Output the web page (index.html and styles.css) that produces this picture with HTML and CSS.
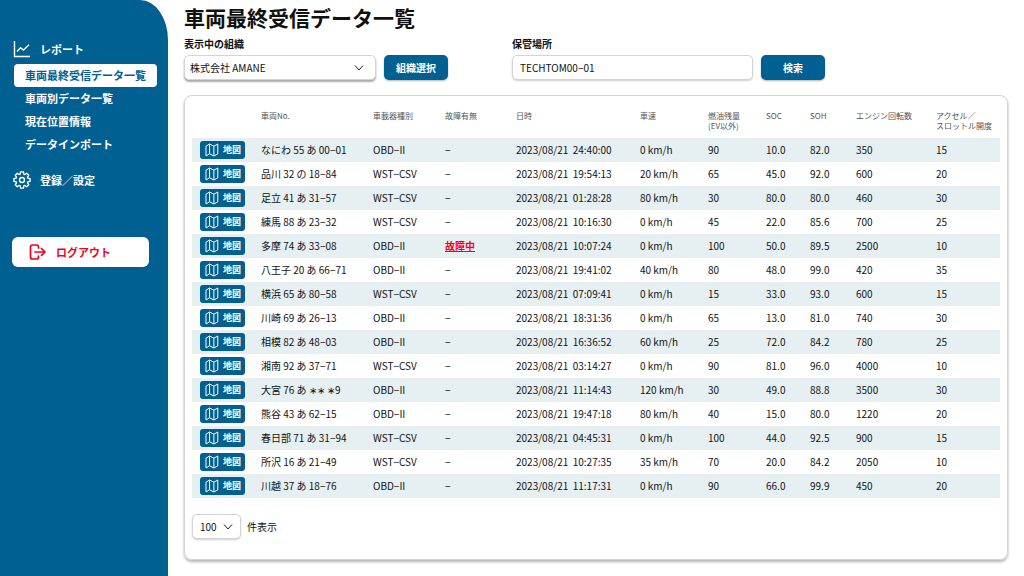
FILE: index.html
```html
<!DOCTYPE html>
<html lang="ja">
<head>
<meta charset="utf-8">
<meta name="viewport" content="width=device-width, initial-scale=1">
<title>車両最終受信データ一覧</title>
<link rel="stylesheet" href="styles.css">
</head>
<body>
<svg class="sprite" aria-hidden="true">
  <symbol id="icon-map" viewBox="0 0 14 14"><path d="M1 3.2 4.6 1v9.8L1 13zM4.6 1l4.3 2.2V13l-4.3-2.2M8.900 3.200 12.800 1v9.800L8.900 13" fill="none" stroke="currentColor" stroke-width="1" stroke-linejoin="round"/></symbol>
</svg>
<div class="app">
  <aside class="sidebar">
    <nav class="nav" aria-label="メインメニュー">
      <div class="nav-heading">
        <svg class="nav-icon" viewBox="0 0 18 18" aria-hidden="true"><path d="M1.500 1v15.500h15.500M4 11.500 7.500 7.800l3 2.200 5.500-5.300" fill="none" stroke="currentColor" stroke-width="1.400"/></svg>
        <span>レポート</span>
      </div>
      <ul class="nav-list">
        <li><a class="nav-link nav-link-active" href="#" aria-current="page">車両最終受信データ一覧</a></li>
        <li><a class="nav-link" href="#">車両別データ一覧</a></li>
        <li><a class="nav-link" href="#">現在位置情報</a></li>
        <li><a class="nav-link" href="#">データインポート</a></li>
      </ul>
      <a class="nav-heading" href="#">
        <svg class="nav-icon" viewBox="0 0 18 18" aria-hidden="true"><path d="M14.930 7.190 17.080 7.580V10.420L14.930 10.810 14.470 11.910 15.720 13.700 13.700 15.720 11.910 14.470 10.810 14.930 10.420 17.080H7.580L7.190 14.930 6.090 14.470 4.300 15.720 2.280 13.700 3.530 11.910 3.070 10.810.92 10.420V7.580L3.070 7.190 3.530 6.090 2.280 4.300 4.300 2.280 6.090 3.530 7.190 3.070 7.580.92H10.420L10.810 3.070 11.910 3.530 13.700 2.280 15.720 4.300 14.470 6.090z" fill="none" stroke="currentColor" stroke-width="1.400" stroke-linejoin="round"/><circle cx="9" cy="9" r="2.500" fill="none" stroke="currentColor" stroke-width="1.400"/></svg>
        <span>登録／設定</span>
      </a>
    </nav>
    <button class="logout" type="button">
      <svg class="logout-icon" viewBox="0 0 18 16" aria-hidden="true"><path d="M9.500 4V3a2 2 0 0 0-2-2H3.500a2 2 0 0 0-2 2v10a2 2 0 0 0 2 2h4a2 2 0 0 0 2-2v-1M6 8h10M12.500 4.500 16 8l-3.500 3.500" fill="none" stroke="currentColor" stroke-width="1.700" stroke-linecap="round" stroke-linejoin="round"/></svg>
      <span>ログアウト</span>
    </button>
  </aside>
  <main class="main">
    <h1 class="title">車両最終受信データ一覧</h1>
    <form class="filters">
      <div class="field field-org">
        <label class="label" for="org">表示中の組織</label>
        <div class="controls">
          <select class="control select" id="org"><option>株式会社 AMANE</option></select>
          <button class="button" type="button">組織選択</button>
        </div>
      </div>
      <div class="field field-place">
        <label class="label" for="place">保管場所</label>
        <div class="controls">
          <input class="control" id="place" type="text" value="TECHTOM00−01">
          <button class="button" type="button">検索</button>
        </div>
      </div>
    </form>
    <section class="card">
      <table class="table">
        <colgroup><col class="c-map"><col class="c-no"><col class="c-device"><col class="c-fault"><col class="c-date"><col class="c-speed"><col class="c-fuel"><col class="c-soc"><col class="c-soh"><col class="c-rpm"><col class="c-accel"></colgroup>
        <thead><tr><td></td><th>車両No.</th><th>車載器種別</th><th>故障有無</th><th>日時</th><th>車速</th><th>燃油残量<br>(EV以外)</th><th>SOC</th><th>SOH</th><th>エンジン回転数</th><th>アクセル／<br>スロットル開度</th></tr></thead>
        <tbody id="rows"></tbody>
      </table>
      <div class="pager">
        <select class="control select select-small" id="size"><option>100</option></select>
        <label for="size">件表示</label>
      </div>
    </section>
  </main>
</div>
<script src="app.js"></script>
</body>
</html>
```
FILE: styles.css
```css
* { box-sizing: border-box; }

body {
  margin: 0;
  background: #fff;
  color: #111;
  font: 10px/16px "Noto Sans CJK JP", sans-serif;
}

button, input, select { font: inherit; color: inherit; }

.sprite { display: none; }

.app { display: flex; min-height: 100vh; }

.sidebar {
  flex: 0 0 168px;
  padding: 39px 11px 0 12px;
  background: #006092;
  border-top-right-radius: 28px 40px;
  color: #fff;
  font-size: 11px;
  font-weight: 700;
}

.nav-heading {
  display: flex;
  align-items: center;
  gap: 9px;
  height: 20px;
  padding-left: 1px;
  color: inherit;
  text-decoration: none;
}

.nav-icon { width: 18px; height: 18px; }

.nav-list {
  margin: 5px 0 14px;
  padding: 0 0 0 2px;
  list-style: none;
}

.nav-link {
  display: block;
  padding: 3px 0 3px 11px;
  border-radius: 4px;
  color: inherit;
  line-height: 17px;
  text-decoration: none;
  white-space: nowrap;
}

.nav-link-active { background: #fff; color: #006092; }

.logout {
  display: flex;
  align-items: center;
  gap: 9px;
  width: 100%;
  max-width: 137px;
  height: 30px;
  margin-top: 47px;
  padding: 0 0 0 17px;
  border: 0;
  border-radius: 6px;
  background: #fff;
  color: #f5001d;
}

.logout-icon { width: 18px; height: 16px; }

.main {
  flex: 1;
  display: flex;
  flex-direction: column;
  min-width: 0;
  padding: 5px 16px 16px;
}

.title {
  margin: 0;
  font-size: 21px;
  font-weight: 700;
  line-height: 24px;
}

.filters { display: flex; gap: 64px; margin-top: 7px; }

.label { display: block; font-weight: 700; }

.controls { display: flex; gap: 8px; margin-top: 3px; }

.control {
  width: 192px;
  height: 25px;
  padding: 0 7px;
  border: 1px solid #d4d4d4;
  border-radius: 5px;
  background: #fff;
  box-shadow: 0 1px 2px rgba(0, 0, 0, 0.2);
}

.field-org .control { box-shadow: 0 2px 2px rgba(0, 0, 0, 0.35); }
.field-place .control { width: 241px; }

.select {
  appearance: none;
  padding-left: 5px;
  background: #fff url("data:image/svg+xml,%3Csvg xmlns='http://www.w3.org/2000/svg' viewBox='0 0 10 6'%3E%3Cpath d='M1 .5l4 4.500 4-4.500' fill='none' stroke='%23222'/%3E%3C/svg%3E") no-repeat right 11px center / 10px 6px;
}

.button {
  width: 64px;
  height: 25px;
  padding: 0;
  border: 0;
  border-radius: 5px;
  background: #006092;
  box-shadow: 0 1px 2px rgba(0, 0, 0, 0.3);
  color: #fff;
  font-weight: 700;
}

.card {
  flex: 1;
  margin-top: 15px;
  padding: 0 7px;
  border: 1px solid #d4d4d4;
  border-radius: 8px;
  box-shadow: 0 2px 3px rgba(0, 0, 0, 0.3);
}

.table {
  width: 100%;
  table-layout: fixed;
  border-collapse: collapse;
}

.c-map { width: 69px; }
.c-no { width: 112px; }
.c-device { width: 72px; }
.c-fault { width: 71px; }
.c-date { width: 124px; }
.c-speed { width: 68px; }
.c-fuel { width: 58px; }
.c-soc { width: 44px; }
.c-soh { width: 46px; }
.c-rpm { width: 80px; }
.c-accel { width: 64px; }

.table th {
  height: 42px;
  padding: 15px 0 0;
  color: #555;
  font-size: 8px;
  font-weight: 400;
  line-height: 10px;
  text-align: left;
  vertical-align: top;
  white-space: nowrap;
}

.table tbody td { height: 24px; padding: 0; white-space: pre; }
.table tbody td:first-child { padding-left: 8px; }
.table tbody tr:nth-child(odd) { background: #e6f0f2; }

.map-button {
  display: flex;
  align-items: center;
  gap: 4px;
  width: 45px;
  height: 18px;
  padding: 0 0 0 5px;
  border: 0;
  border-radius: 3px;
  background: #006092;
  color: #fff;
  font-size: 9px;
  font-weight: 700;
}

.map-icon { width: 14px; height: 14px; }

.fault { color: #f5001d; font-weight: 700; }

.pager { display: flex; align-items: center; gap: 6px; margin-top: 16px; }

.select-small {
  width: 49px;
  padding-left: 7px;
  background-position: right 7px center;
}
```
FILE: app.js
```js
const vehicles = [
  ["なにわ 55 あ 00−01", "OBD−II", "", "2023/08/21  24:40:00", 0, 90, "10.0", "82.0", 350, 15],
  ["品川 32 の 18−84", "WST−CSV", "", "2023/08/21  19:54:13", 20, 65, "45.0", "92.0", 600, 20],
  ["足立 41 あ 31−57", "WST−CSV", "", "2023/08/21  01:28:28", 80, 30, "80.0", "80.0", 460, 30],
  ["練馬 88 あ 23−32", "WST−CSV", "", "2023/08/21  10:16:30", 0, 45, "22.0", "85.6", 700, 25],
  ["多摩 74 あ 33−08", "OBD−II", "故障中", "2023/08/21  10:07:24", 0, 100, "50.0", "89.5", 2500, 10],
  ["八王子 20 あ 66−71", "OBD−II", "", "2023/08/21  19:41:02", 40, 80, "48.0", "99.0", 420, 35],
  ["横浜 65 あ 80−58", "WST−CSV", "", "2023/08/21  07:09:41", 0, 15, "33.0", "93.0", 600, 15],
  ["川崎 69 あ 26−13", "OBD−II", "", "2023/08/21  18:31:36", 0, 65, "13.0", "81.0", 740, 30],
  ["相模 82 あ 48−03", "OBD−II", "", "2023/08/21  16:36:52", 60, 25, "72.0", "84.2", 780, 25],
  ["湘南 92 あ 37−71", "WST−CSV", "", "2023/08/21  03:14:27", 0, 90, "81.0", "96.0", 4000, 10],
  ["大宮 76 あ ∗∗ ∗9", "OBD−II", "", "2023/08/21  11:14:43", 120, 30, "49.0", "88.8", 3500, 30],
  ["熊谷 43 あ 62−15", "OBD−II", "", "2023/08/21  19:47:18", 80, 40, "15.0", "80.0", 1220, 20],
  ["春日部 71 あ 31−94", "WST−CSV", "", "2023/08/21  04:45:31", 0, 100, "44.0", "92.5", 900, 15],
  ["所沢 16 あ 21−49", "WST−CSV", "", "2023/08/21  10:27:35", 35, 70, "20.0", "84.2", 2050, 10],
  ["川越 37 あ 18−76", "OBD−II", "", "2023/08/21  11:17:31", 0, 90, "66.0", "99.9", 450, 20],
];

const mapButton = '<button class="map-button" type="button"><svg class="map-icon" aria-hidden="true"><use href="#icon-map"/></svg>地図</button>';

document.getElementById("rows").innerHTML = vehicles
  .map(([no, device, fault, date, speed, ...rest]) => {
    const status = fault ? `<a class="fault" href="#">${fault}</a>` : "−";
    const cells = [mapButton, no, device, status, date, `${speed} km/h`, ...rest];
    return `<tr>${cells.map((cell) => `<td>${cell}</td>`).join("")}</tr>`;
  })
  .join("");
```
